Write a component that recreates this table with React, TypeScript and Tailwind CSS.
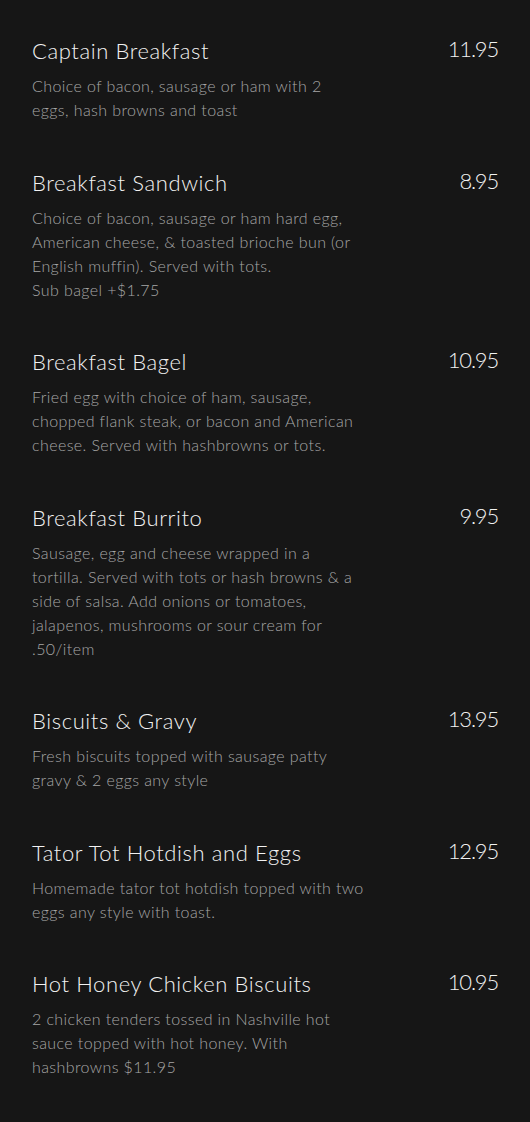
const items = [
  {
    name: 'Captain Breakfast',
    price: '11.95',
    lines: ['Choice of bacon, sausage or ham with 2', 'eggs, hash browns and toast'],
  },
  {
    name: 'Breakfast Sandwich',
    price: '8.95',
    lines: [
      'Choice of bacon, sausage or ham hard egg,',
      'American cheese, & toasted brioche bun (or',
      'English muffin). Served with tots.',
      'Sub bagel +$1.75',
    ],
  },
  {
    name: 'Breakfast Bagel',
    price: '10.95',
    lines: [
      'Fried egg with choice of ham, sausage,',
      'chopped flank steak, or bacon and American',
      'cheese. Served with hashbrowns or tots.',
    ],
  },
  {
    name: 'Breakfast Burrito',
    price: '9.95',
    lines: [
      'Sausage, egg and cheese wrapped in a',
      'tortilla. Served with tots or hash browns & a',
      'side of salsa. Add onions or tomatoes,',
      'jalapenos, mushrooms or sour cream for',
      '.50/item',
    ],
  },
  {
    name: 'Biscuits & Gravy',
    price: '13.95',
    lines: ['Fresh biscuits topped with sausage patty', 'gravy & 2 eggs any style'],
  },
  {
    name: 'Tator Tot Hotdish and Eggs',
    price: '12.95',
    lines: ['Homemade tator tot hotdish topped with two', 'eggs any style with toast.'],
  },
  {
    name: 'Hot Honey Chicken Biscuits',
    price: '10.95',
    lines: [
      '2 chicken tenders tossed in Nashville hot',
      'sauce topped with hot honey. With',
      'hashbrowns $11.95',
    ],
  },
];

export default function App() {
  return (
    <div
      className="min-h-[1122px] w-full bg-[#161616] px-8 pt-9 pb-10"
      style={{ fontFamily: 'Lato, "Noto Sans", sans-serif' }}
    >
      <div className="flex flex-col gap-[45.5px]">
        {items.map((item) => (
          <div key={item.name} className="flex items-start justify-between">
            <div className="flex flex-col gap-2">
              <h3 className="text-[22px] leading-[30px] font-light text-[#f2f2f2] tracking-[0.6px]">
                {item.name}
              </h3>
              <p className="text-[16px] leading-6 font-light text-[#a6a6a6] tracking-[0.4px]">
                {item.lines.map((line, i) => (
                  <span key={i} className="block whitespace-nowrap">
                    {line}
                  </span>
                ))}
              </p>
            </div>
            <span className="text-[22px] leading-[30px] font-light text-[#f2f2f2] tracking-[-1.2px] -mt-0.5">
              {item.price}
            </span>
          </div>
        ))}
      </div>
    </div>
  );
}
